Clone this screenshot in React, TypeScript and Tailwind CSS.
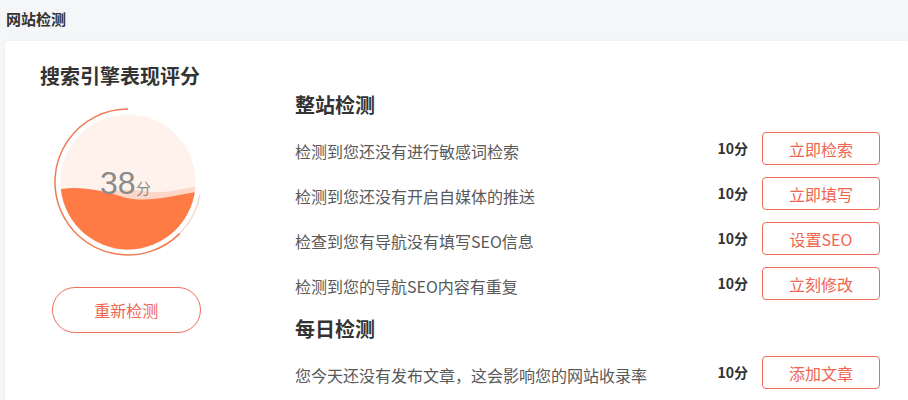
import React from 'react';

const cjk = { fontFamily: '"Noto Sans CJK SC", "Noto Sans", sans-serif' };

interface CheckItem {
  text: string;
  score: number;
  action: string;
}

const siteChecks: CheckItem[] = [
  { text: '检测到您还没有进行敏感词检索', score: 10, action: '立即检索' },
  { text: '检测到您还没有开启自媒体的推送', score: 10, action: '立即填写' },
  { text: '检查到您有导航没有填写SEO信息', score: 10, action: '设置SEO' },
  { text: '检测到您的导航SEO内容有重复', score: 10, action: '立刻修改' },
];

const dailyChecks: CheckItem[] = [
  { text: '您今天还没有发布文章，这会影响您的网站收录率', score: 10, action: '添加文章' },
  { text: '您今天还没有更新产品', score: 10, action: '添加产品' },
];

function ScoreBall({ score }: { score: number }) {
  return (
    <svg width="150" height="150" viewBox="0 0 150 150" className="block">
      <defs>
        <clipPath id="ball">
          <circle cx="75" cy="75" r="67.5" />
        </clipPath>
      </defs>
      {/* ring */}
      <path d="M75 2 A73 73 0 1 0 126.6 126.6" fill="none" stroke="#f07a52" strokeWidth="1.5" />
      <path d="M126.6 126.6 A73 73 0 0 0 146.9 87.7" fill="none" stroke="#f07a52" strokeOpacity="0.3" strokeWidth="1.5" />
      <g clipPath="url(#ball)">
        <rect x="0" y="0" width="150" height="150" fill="#fff2ed" />
        <path d="M0 90 C30 95 60 78 90 84 C115 88 130 80 150 79 L150 150 L0 150 Z" fill="#fcd6c6" />
        <path d="M0 84 C20 78 45 82 70 90 C95 97 120 88 150 84 L150 150 L0 150 Z" fill="#ff7b46" />
      </g>
      <text x="47" y="87" fill="#8a8a8a" fontSize="32" fontFamily='"Liberation Sans", sans-serif'>
        {score}
      </text>
      <text x="83" y="87" fill="#8a8a8a" fontSize="15" fontFamily='"Noto Sans CJK SC", sans-serif'>
        分
      </text>
    </svg>
  );
}

function CheckRow({ item }: { item: CheckItem }) {
  return (
    <div className="flex items-center h-[33px]">
      <span className="flex-1 pt-[4px] text-[16px] text-[#595959]">{item.text}</span>
      <span className="text-[14px] font-bold text-[#333]">{item.score}分</span>
      <button className="ml-[14px] w-[118px] h-[33px] rounded-[4px] border border-[#ef6c58] bg-white text-[16px] text-[#ef6550]">
        {item.action}
      </button>
    </div>
  );
}

export default function App() {
  return (
    <div className="w-[908px] h-[400px] overflow-hidden bg-[#f5f6f8]" style={cjk}>
      <div className="h-[41px] pl-[6px] pt-[8px] text-[15px] font-bold leading-[22px] text-[#333]">
        网站检测
      </div>
      <div className="ml-[5px] flex h-[400px] rounded-tl-[4px] bg-white shadow-[0_0_4px_rgba(0,0,0,0.04)]">
        {/* Left: score */}
        <div className="w-[290px] shrink-0 pl-[35px] pt-[21px]">
          <h2 className="text-[20px] font-bold leading-[28px] text-[#333]">搜索引擎表现评分</h2>
          <div className="ml-[12.7px] mt-[17px] w-[150px]">
            <ScoreBall score={38} />
            <button className="mt-[30px] -ml-[1px] w-[149px] h-[46px] rounded-full border-[1.5px] border-[#ef6c58] bg-white text-[16px] text-[#ef6550]">
              重新检测
            </button>
          </div>
        </div>

        {/* Right: checks */}
        <div className="flex-1 pr-[28px] pt-[50px]">
          <h3 className="text-[20px] font-bold leading-[28px] text-[#333]">整站检测</h3>
          <div className="mt-[13px] flex flex-col gap-[12px]">
            {siteChecks.map((item) => (
              <CheckRow key={item.action} item={item} />
            ))}
          </div>
          <h3 className="mt-[15px] text-[20px] font-bold leading-[28px] text-[#333]">每日检测</h3>
          <div className="mt-[13px] flex flex-col gap-[11px]">
            {dailyChecks.map((item) => (
              <CheckRow key={item.action} item={item} />
            ))}
          </div>
        </div>
      </div>
    </div>
  );
}
